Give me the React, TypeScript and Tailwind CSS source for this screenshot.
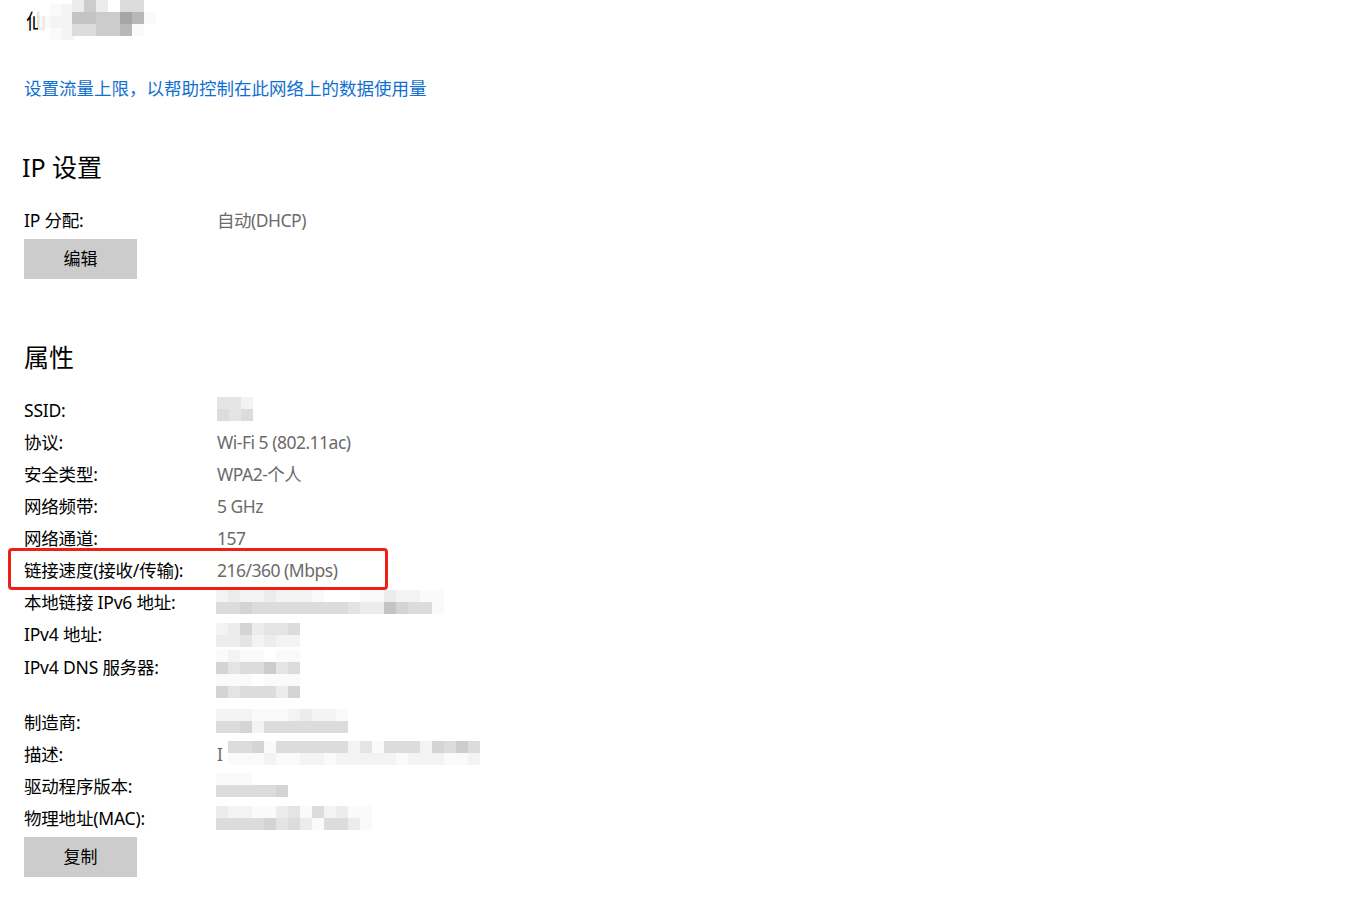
import React from "react";

const shade: Record<string, string> = {
  "0": "bg-white",
  a: "bg-[#fafafa]",
  b: "bg-[#f3f3f3]",
  c: "bg-[#ececec]",
  d: "bg-[#e4e4e4]",
  e: "bg-[#dcdcdc]",
  f: "bg-[#d4d4d4]",
  g: "bg-[#cccccc]",
  h: "bg-[#c4c4c4]",
  i: "bg-[#b8b8b8]",
  j: "bg-[#a6a6a6]",
};

// pixelated (blurred out) value
const Mosaic: React.FC<{ rows: string[]; className?: string }> = ({ rows, className = "" }) => (
  <div className={`flex flex-col ${className}`}>
    {rows.map((r, i) => (
      <div key={i} className="flex">
        {r.split("").map((c, j) => (
          <div key={j} className={`w-[12px] h-[12px] ${shade[c]}`} />
        ))}
      </div>
    ))}
  </div>
);

const Row: React.FC<{ label: string; children?: React.ReactNode; className?: string }> = ({
  label,
  children,
  className = "",
}) => (
  <div className={`relative flex leading-[23px] ${className}`}>
    <div className="w-[193px] shrink-0 text-black tracking-[-0.2px]">{label}</div>
    <div className="text-[#6b6b6b] tracking-[-0.5px]">{children}</div>
  </div>
);

const GrayButton: React.FC<{ children: React.ReactNode; className?: string }> = ({ children, className = "" }) => (
  <button className={`w-[113px] h-[40px] bg-[#cccccc] text-black text-[17px] ${className}`}>{children}</button>
);

const App: React.FC = () => {
  return (
    <div
      className="min-h-[919px] bg-white pl-[24px] text-[17.5px]"
      style={{ fontFamily: '"Noto Sans", "Noto Sans CJK SC", sans-serif' }}
    >
      {/* top, partly blurred */}
      <div className="relative h-[36px]">
        <div className="absolute left-[2px] top-[10px] text-[20px] leading-[24px] text-black">仙</div>
        <Mosaic className="absolute left-[14px] top-[4px] opacity-90" rows={["0ab", "abb", "0ab"]} />
        <Mosaic className="absolute left-[48px] top-0" rows={["cgc0ee0", "hhggjia", "eeggia0"]} />
      </div>

      <a className="block mt-[40px] leading-[24px] text-[#1170cf] cursor-pointer">
        设置流量上限，以帮助控制在此网络上的数据使用量
      </a>

      {/* IP settings */}
      <h2 className="mt-[50px] -ml-[2px] text-[25px] leading-[34px] text-black">IP 设置</h2>
      <Row label="IP 分配:" className="mt-[25px]">
        自动(DHCP)
      </Row>
      <GrayButton className="mt-[7px]">编辑</GrayButton>

      {/* properties */}
      <h2 className="mt-[61px] text-[25px] leading-[34px] text-black">属性</h2>
      <div className="mt-[25px] flex flex-col gap-[9px]">
        <Row label="SSID:">
          <Mosaic className="mt-[-2px]" rows={["ddb0", "ede0"]} />
        </Row>
        <Row label="协议:">Wi-Fi 5 (802.11ac)</Row>
        <Row label="安全类型:">WPA2-个人</Row>
        <Row label="网络频带:">5 GHz</Row>
        <Row label="网络通道:">157</Row>
        <Row label="链接速度(接收/传输):">
          216/360 (Mbps)
          <div className="absolute left-[-16px] top-[-11px] w-[380px] h-[42px] border-[3px] border-[#ee2016] rounded-[4px]" />
        </Row>
        <Row label="本地链接 IPv6 地址:">
          <Mosaic className="mt-[-1px] -ml-[1px]" rows={["bcbbcbbba000aacbbaa", "eefeeeeeeeedcchfeea"]} />
        </Row>
        <Row label="IPv4 地址:">
          <Mosaic className="-ml-[1px]" rows={["bcfcdde", "ccdbcbb"]} />
        </Row>
        <Row label="IPv4 DNS 服务器:">
          <div className="h-[46px] flex flex-col">
            <Mosaic className="-ml-[1px] mt-[-6px]" rows={["abaa0aa", "fdeegde", "aaa0aaa", "fdeeecf"]} />
          </div>
        </Row>
        <Row label="制造商:">
          <Mosaic className="-ml-[1px] mt-[-2px]" rows={["bbbaaabcbba", "eefbeeeeeee"]} />
        </Row>
        <Row label="描述:">
          <div className="flex">
            <span className="w-[11px]">I</span>
            <Mosaic className="mt-[-2px]" rows={["eefaeeeeeebdaeeebfege", "aaabaabbabbbbbabbbaab"]} />
          </div>
        </Row>
        <Row label="驱动程序版本:">
          <Mosaic className="-ml-[1px] mt-[-2px]" rows={["aaa000", "eeeeef"]} />
        </Row>
        <Row label="物理地址(MAC):">
          <Mosaic className="-ml-[1px] mt-[-1px]" rows={["cbbaacdaebcaa", "eeeefdecaeeca"]} />
        </Row>
      </div>
      <GrayButton className="mt-[7px]">复制</GrayButton>
    </div>
  );
};

export default App;
